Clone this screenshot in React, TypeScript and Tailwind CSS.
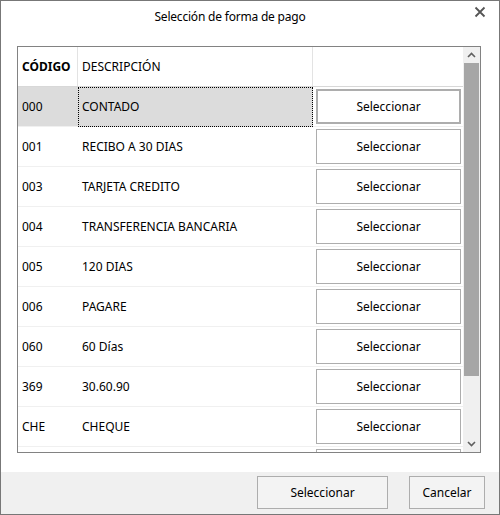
import { Fragment } from "react";

const rows = [
  { code: "000", desc: "CONTADO" },
  { code: "001", desc: "RECIBO A 30 DIAS" },
  { code: "003", desc: "TARJETA CREDITO" },
  { code: "004", desc: "TRANSFERENCIA BANCARIA" },
  { code: "005", desc: "120 DIAS" },
  { code: "006", desc: "PAGARE" },
  { code: "060", desc: "60 Días" },
  { code: "369", desc: "30.60.90" },
  { code: "CHE", desc: "CHEQUE" },
  { code: "", desc: "" },
];

const font = "font-['Segoe_UI','Noto_Sans',sans-serif] text-[12px] text-black";

export default function App() {
  return (
    <div className={`w-[500px] h-[515px] border border-[#777777] bg-white flex flex-col ${font}`}>
      {/* title bar */}
      <div className="h-[31px] flex items-center">
        <div className="flex-1 text-center tracking-[-0.2px]">Selección de forma de pago</div>
        <div className="w-[40px] flex justify-end pr-[13px] pb-[9px]">
          <svg width="12" height="12" viewBox="0 0 12 12">
            <path d="M1.5 1.5 L10.5 10.5 M10.5 1.5 L1.5 10.5" stroke="#555555" strokeWidth="1.8" />
          </svg>
        </div>
      </div>

      <div className="pt-[14px] pl-[16px]">
        <div className="w-[464px] h-[407px] border border-[#828282] flex">
          <div className="w-[445px] overflow-hidden flex flex-col">
            {/* header */}
            <div className="flex h-[40px] shrink-0 border-b border-[#d8d8d8]">
              <div className="w-[60px] border-r border-[#e3e3e3] pl-[4px] flex items-center font-bold">CÓDIGO</div>
              <div className="w-[235px] border-r border-[#e3e3e3] pl-[4px] flex items-center">DESCRIPCIÓN</div>
              <div className="flex-1" />
            </div>
            {rows.map((r, i) => (
              <Fragment key={i}>
                <div className="flex h-[40px] shrink-0 border-b border-[#f0f0f0]">
                  <div className={`w-[60px] pl-[4px] flex items-center ${i === 0 ? "bg-[#dcdcdc]" : ""}`}>{r.code}</div>
                  <div
                    className={`w-[235px] flex items-center ${
                      i === 0 ? "bg-[#dcdcdc] border border-dotted border-black -mb-px pl-[3px]" : "pl-[4px]"
                    }`}
                  >
                    {r.desc}
                  </div>
                  <div className="flex-1 pl-[3px] pr-[2px] py-[2px]">
                    <button
                      className={`w-full h-full bg-white flex items-center justify-center ${
                        i === 0 ? "border-2 border-[#adadad]" : "border border-[#adadad]"
                      }`}
                    >
                      {r.code ? "Seleccionar" : ""}
                    </button>
                  </div>
                </div>
              </Fragment>
            ))}
          </div>
          {/* scrollbar */}
          <div className="w-[17px] bg-[#f0f0f0] flex flex-col">
            <div className="h-[16px] flex items-center justify-center">
              <svg width="9" height="6" viewBox="0 0 9 6">
                <path d="M1 5 L4.5 1.5 L8 5" stroke="#606060" strokeWidth="1.6" fill="none" />
              </svg>
            </div>
            <div className="mx-px h-[313px] bg-[#a6a6a6]" />
            <div className="flex-1" />
            <div className="h-[16px] flex items-center justify-center">
              <svg width="9" height="6" viewBox="0 0 9 6">
                <path d="M1 1 L4.5 4.5 L8 1" stroke="#606060" strokeWidth="1.6" fill="none" />
              </svg>
            </div>
          </div>
        </div>
      </div>

      <div className="mt-[19px] flex-1 bg-[#f0f0f0] flex justify-end items-start pt-[4px] pr-[14px] gap-[21px]">
        <button className="w-[131px] h-[33px] border border-[#adadad] bg-[#f3f3f3]">Seleccionar</button>
        <button className="w-[76px] h-[33px] border border-[#adadad] bg-[#f3f3f3]">Cancelar</button>
      </div>
    </div>
  );
}
